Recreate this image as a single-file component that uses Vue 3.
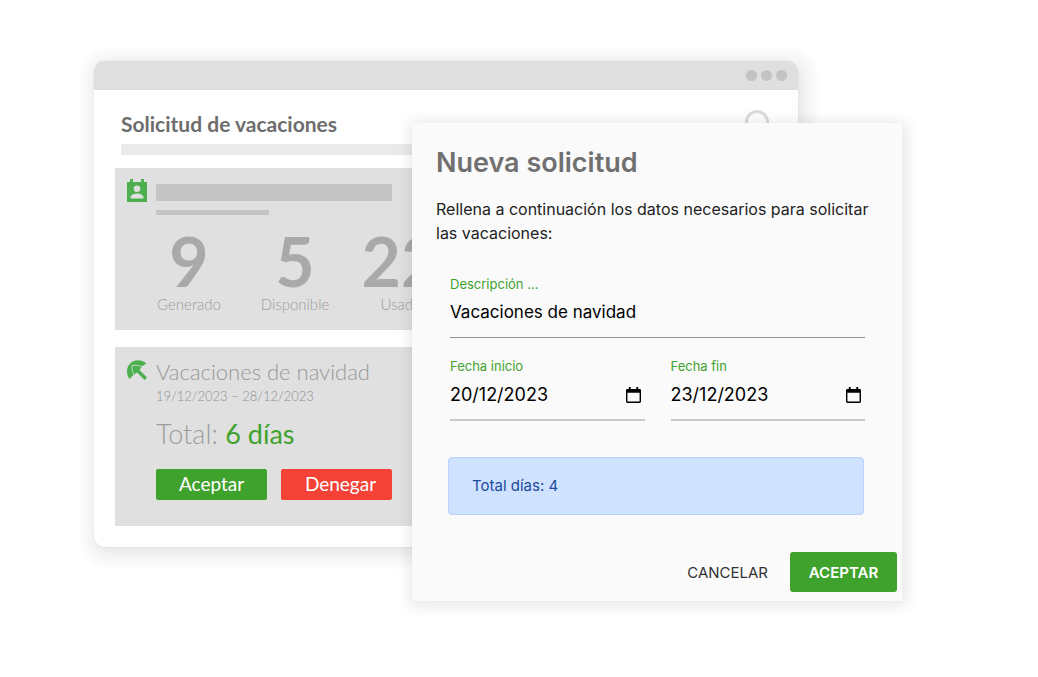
<script setup>
import { ref } from 'vue'

const stats = [
  { value: 9, label: 'Generado' },
  { value: 5, label: 'Disponible' },
  { value: 22, label: 'Usado' }
]

const description = ref('Vacaciones de navidad')
const dates = ref([
  { id: 'start', label: 'Fecha inicio', value: '20/12/2023' },
  { id: 'end', label: 'Fecha fin', value: '23/12/2023' }
])
</script>

<template>
  <main class="stage">
    <section class="window">
      <header class="titlebar">
        <span class="dot"></span>
        <span class="dot"></span>
        <span class="dot"></span>
      </header>
      <div class="content">
        <div class="heading">
          <h1>Solicitud de vacaciones</h1>
          <svg class="search" viewBox="0 0 32 32" aria-hidden="true">
            <circle cx="12" cy="12" r="10.5" />
            <path d="M19.5 19.5l9 9" />
          </svg>
        </div>
        <div class="rule"></div>

        <article class="card summary">
          <svg class="icon" viewBox="0 0 20 23" aria-hidden="true">
            <path fill-rule="evenodd" d="M0 3h3V0h3v3h8V0h3v3h3v20H0zM10 6.500a3.300 3.300 0 1 0 0 6.600a3.300 3.300 0 1 0 0-6.600zM3.500 19.500h13v-1c0-2.600-4-4-6.500-4s-6.500 1.400-6.500 4z" />
          </svg>
          <div class="body">
            <div class="bar"></div>
            <div class="bar short"></div>
          </div>
          <dl class="stats">
            <div v-for="s in stats" :key="s.label" class="stat">
              <dd>{{ s.value }}</dd>
              <dt>{{ s.label }}</dt>
            </div>
          </dl>
        </article>

        <article class="card request">
          <svg class="icon" viewBox="0 0 20 20" aria-hidden="true">
            <path d="M19.500 3.300C14-1.200 7-.6 3.200 3.400C-.8 7.200-1.100 13.500 2.500 19L6.500 15L10 12.500L17.600 20L20 17.600L12.500 10L15 6.500z" />
            <path class="seam" d="M5 5.500C5 9 5.500 12 6.700 14.500M5 5.500C8.500 5 12 5.500 15 6.700" />
          </svg>
          <div class="body">
            <h2>Vacaciones de navidad</h2>
            <p class="range">19/12/2023 – 28/12/2023</p>
            <p class="total">Total: <strong>6 días</strong></p>
            <div class="choices">
              <button type="button" class="accept">Aceptar</button>
              <button type="button" class="deny">Denegar</button>
            </div>
          </div>
        </article>
      </div>
    </section>

    <section class="dialog" role="dialog" aria-labelledby="dialog-title">
      <h2 id="dialog-title">Nueva solicitud</h2>
      <p class="intro">Rellena a continuación los datos necesarios para solicitar las vacaciones:</p>
      <form class="form" @submit.prevent>
        <div class="field">
          <label for="description">Descripción ...</label>
          <input id="description" v-model="description" type="text" />
        </div>
        <div class="dates">
          <div v-for="d in dates" :key="d.id" class="field">
            <label :for="d.id">{{ d.label }}</label>
            <div class="picker">
              <input :id="d.id" v-model="d.value" type="text" />
              <button type="button" aria-label="Abrir calendario">
                <svg viewBox="0 0 16 17" aria-hidden="true">
                  <path d="M3 0h2v2h6V0h2v2h1.500A1.500 1.500 0 0 1 16 3.500v12a1.500 1.500 0 0 1-1.500 1.500h-13A1.500 1.500 0 0 1 0 15.500v-12A1.500 1.500 0 0 1 1.500 2H3zM1.500 6v9.500h13V6z" />
                </svg>
              </button>
            </div>
          </div>
        </div>
        <output class="notice">Total días: 4</output>
        <footer class="actions">
          <button type="button" class="cancel">CANCELAR</button>
          <button type="submit" class="submit">ACEPTAR</button>
        </footer>
      </form>
    </section>
  </main>
</template>

<style>
body {
  margin: 0;
  background: #fff;
}
</style>

<style scoped>
* {
  box-sizing: border-box;
}

h1, h2, p, dl, dd {
  margin: 0;
}

button, input {
  margin: 0;
  padding: 0;
  border: 0;
  background: none;
  font: inherit;
  color: inherit;
}

button {
  cursor: pointer;
}

.stage {
  display: grid;
  grid-template-columns: minmax(0, 318fr) minmax(0, 386fr) minmax(0, 104fr);
  align-items: start;
  padding: 61px 136px 76px 94px;
}

.window {
  grid-area: 1 / 1 / 2 / 3;
  overflow: hidden;
  padding-bottom: 21px;
  border-radius: 11px;
  background: #fff;
  box-shadow: 3px 4px 14px 2px rgba(0, 0, 0, 0.08), 3px 4px 4px 16px rgba(0, 0, 0, 0.025), 0 0 2px rgba(0, 0, 0, 0.1);
  font-family: Lato, "Open Sans", sans-serif;
  color: #a6a6a6;
}

.titlebar {
  display: flex;
  align-items: center;
  justify-content: flex-end;
  gap: 4px;
  height: 29px;
  padding-right: 11px;
  background: #dfdfdf;
}

.dot {
  width: 11px;
  height: 11px;
  border-radius: 50%;
  background: #c3c3c3;
}

.content {
  display: flex;
  flex-direction: column;
  padding: 20px 21px 0;
}

.heading {
  display: flex;
  justify-content: space-between;
  height: 34px;
  padding: 0 0 0 6px;
}

.heading h1 {
  font-size: 21px;
  line-height: 28px;
  font-weight: 700;
  color: #6d6d6d;
}

.search {
  width: 32px;
  height: 32px;
  fill: none;
  stroke: #dcdcdc;
  stroke-width: 3;
}

.rule {
  height: 11px;
  margin-left: 6px;
  background: #eaeaea;
}

.card {
  display: grid;
  grid-template-columns: 20px minmax(0, 1fr);
  column-gap: 9px;
  margin-top: 13px;
  padding-left: 12px;
  background: #e0e0e0;
}

.icon {
  width: 20px;
  fill: #4caf50;
}

.seam {
  fill: none;
  stroke: #e0e0e0;
  stroke-width: 0.8;
}

.summary {
  padding-top: 11px;
  padding-bottom: 16px;
}

.summary .body {
  padding-top: 5px;
}

.bar {
  width: 236px;
  height: 17px;
  background: #c4c4c4;
}

.bar.short {
  width: 113px;
  height: 5px;
  margin-top: 9px;
}

.stats {
  grid-column: 1 / 3;
  display: grid;
  grid-template-columns: repeat(3, 106px);
  padding: 13px 0 0 9px;
  text-align: center;
}

.stat {
  display: flex;
  flex-direction: column;
}

.stat dd {
  font-size: 68px;
  line-height: 66px;
  font-weight: 700;
  color: #a9a9a9;
}

.stat dt {
  font-size: 15px;
  line-height: 20px;
  font-weight: 300;
  color: #9c9c9c;
}

.request {
  margin-top: 17px;
  padding-top: 13px;
  padding-bottom: 26px;
}

.request h2 {
  font-size: 22px;
  line-height: 24px;
  font-weight: 300;
  color: #989898;
}

.range {
  font-size: 13px;
  line-height: 25px;
  font-weight: 300;
  color: #8f8f8f;
}

.total {
  padding-top: 8px;
  font-size: 27px;
  line-height: 34px;
  font-weight: 300;
  color: #9c9c9c;
}

.total strong {
  font-weight: 400;
  color: #3fa22d;
}

.choices {
  display: flex;
  gap: 14px;
  padding-top: 18px;
}

.choices button {
  width: 111px;
  height: 31px;
  padding-bottom: 2px;
  border-radius: 2px;
  font-size: 19px;
  color: #fff;
}

.accept {
  background: #3fa22d;
}

.choices .deny {
  padding-left: 8px;
  background: #f44336;
}

.dialog {
  grid-area: 1 / 2 / 2 / 4;
  z-index: 1;
  margin-top: 62px;
  padding: 22px 5px 9px 24px;
  background: #fafafa;
  box-shadow: 1px 2px 14px 3px rgba(0, 0, 0, 0.1);
  font-family: Inter, Roboto, sans-serif;
  color: #222;
}

.dialog h2 {
  font-size: 27px;
  line-height: 36px;
  font-weight: 600;
  color: #707070;
}

.intro {
  padding: 16px 24px 0 0;
  font-size: 16px;
  line-height: 24px;
}

.form {
  padding-top: 30px;
}

.field {
  display: flex;
  flex-direction: column;
  min-width: 0;
  border-bottom: 1px solid #949494;
}

.form > .field {
  margin: 0 32px 0 14px;
}

.field label {
  font-size: 13px;
  line-height: 18px;
  color: #3fa22d;
}

.field input {
  width: 100%;
  min-width: 0;
  height: 44px;
  padding-bottom: 6px;
  font-size: 17px;
  color: #000;
}

.dates {
  display: grid;
  grid-template-columns: 1fr 1fr;
  gap: 26px;
  margin: 19px 32px 0 14px;
}

.dates .field {
  border-bottom: 2px solid #c9c9c9;
}

.dates .field input {
  font-size: 18px;
}

.picker {
  display: flex;
  align-items: center;
}

.picker button {
  padding: 0 4px 4px 0;
}

.picker svg {
  display: block;
  width: 15px;
  height: 16px;
}

.notice {
  display: block;
  margin: 36px 33px 0 12px;
  padding: 16px 23px;
  border: 1px solid #b6d1fb;
  border-radius: 4px;
  background: #cfe2ff;
  font-size: 15px;
  line-height: 24px;
  color: #1c4ba0;
}

.actions {
  display: flex;
  justify-content: flex-end;
  gap: 6px;
  padding-top: 37px;
}

.actions button {
  height: 40px;
  padding: 0 16px;
  border-radius: 3px;
  font-size: 15px;
}

.cancel {
  color: #333;
}

.actions .submit {
  width: 107px;
  background: #3fa22d;
  font-weight: 600;
  color: #fff;
}
</style>
